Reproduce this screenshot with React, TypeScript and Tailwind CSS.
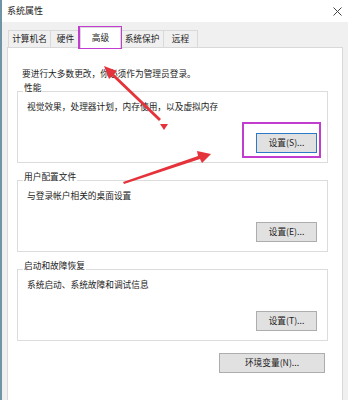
const font = { fontFamily: '"Noto Sans CJK SC", "Noto Sans", sans-serif' };

function Tab({ label, w, active }: { label: string; w: string; active?: boolean }) {
    if (active) {
        return (
            <div className={"h-[21px] flex items-center justify-center bg-white border border-[#d9d9d9] border-b-0 -mb-px -ml-px relative z-10 " + w}>
                {label}
            </div>
        );
    }
    return (
        <div className={"h-[17px] flex items-center justify-center bg-[#f0f0f0] border border-[#d9d9d9] border-b-0 -ml-px first:ml-0 " + w}>
            {label}
        </div>
    );
}

function Btn({ label, focus, wide }: { label: string; focus?: boolean; wide?: boolean }) {
    return (
        <div
            className={
                "h-[20px] flex items-center justify-center bg-[#e1e1e1] border " +
                (focus ? "border-[#2b79c7] " : "border-[#adadad] ") +
                (wide ? "w-[106px]" : "w-[61px]")
            }
        >
            {label}
        </div>
    );
}

function Group({ title, desc, btn, focus }: { title: string; desc: string; btn: string; focus?: boolean }) {
    return (
        <div className="relative border border-[#dcdcdc] w-[311px] h-[72px] pl-[9px] pr-[10px] pt-[9px] pb-[9px] flex flex-col">
            <span className="absolute left-[5px] top-[-10px] px-px bg-white leading-[12px]">{title}</span>
            <div className="leading-[12px]">{desc}</div>
            <div className="flex-1" />
            <div className="flex justify-end">
                <Btn label={btn} focus={focus} />
            </div>
        </div>
    );
}

export default function App() {
    return (
        <div className="w-[348px] h-[400px] overflow-hidden relative bg-[#f0f0f0] border-l-2 border-[#6f94a6] text-[8.7px] text-[#222]" style={font}>
            <div className="h-[22px] bg-white flex items-center justify-between pl-[5px] pr-[6px] text-[9px]">
                <span>系统属性</span>
                <svg width="9" height="9" viewBox="0 0 9 9">
                    <path d="M0.5 0.5 L8.5 8.5 M8.5 0.5 L0.5 8.5" stroke="#444" strokeWidth="1" />
                </svg>
            </div>
            <div className="pl-[5px] pt-[5px]">
                <div className="flex items-end h-[20px] pl-px">
                    <Tab label="计算机名" w="w-[43px]" />
                    <Tab label="硬件" w="w-[31px]" />
                    <Tab label="高级" w="w-[41px]" active />
                    <Tab label="系统保护" w="w-[44px]" />
                    <Tab label="远程" w="w-[35px]" />
                </div>
                <div className="bg-white border border-[#d9d9d9] w-[336px] h-[400px] pl-[9px] pt-[20px]">
                    <div className="pl-[5px] leading-[12px]">要进行大多数更改，你必须作为管理员登录。</div>
                    <div className="mt-[11px] flex flex-col gap-[17px]">
                        <Group title="性能" desc="视觉效果，处理器计划，内存使用，以及虚拟内存" btn="设置(S)..." focus />
                        <Group title="用户配置文件" desc="与登录帐户相关的桌面设置" btn="设置(E)..." />
                        <Group title="启动和故障恢复" desc="系统启动、系统故障和调试信息" btn="设置(T)..." />
                    </div>
                    <div className="flex justify-end w-[308px] mt-[12px]">
                        <Btn label="环境变量(N)..." wide />
                    </div>
                </div>
            </div>
            <svg className="absolute left-[-2px] top-0 pointer-events-none" width="348" height="400" viewBox="0 0 348 400">
                <rect x="79" y="27" width="42" height="21" fill="none" stroke="#c13ccf" strokeWidth="2" />
                <rect x="243" y="123" width="77" height="34" fill="none" stroke="#c13ccf" strokeWidth="2" />
                <polygon points="104,66 117,71 114,74 161,119 159,121 112,76 109,79" fill="#e5333b" />
                <polygon points="160,124 168,124 164,130" fill="#e5333b" />
                <polygon points="211,154 202,163 200,159 124,184 123,182 198,156 197,151" fill="#e5333b" />
            </svg>
        </div>
    );
}
